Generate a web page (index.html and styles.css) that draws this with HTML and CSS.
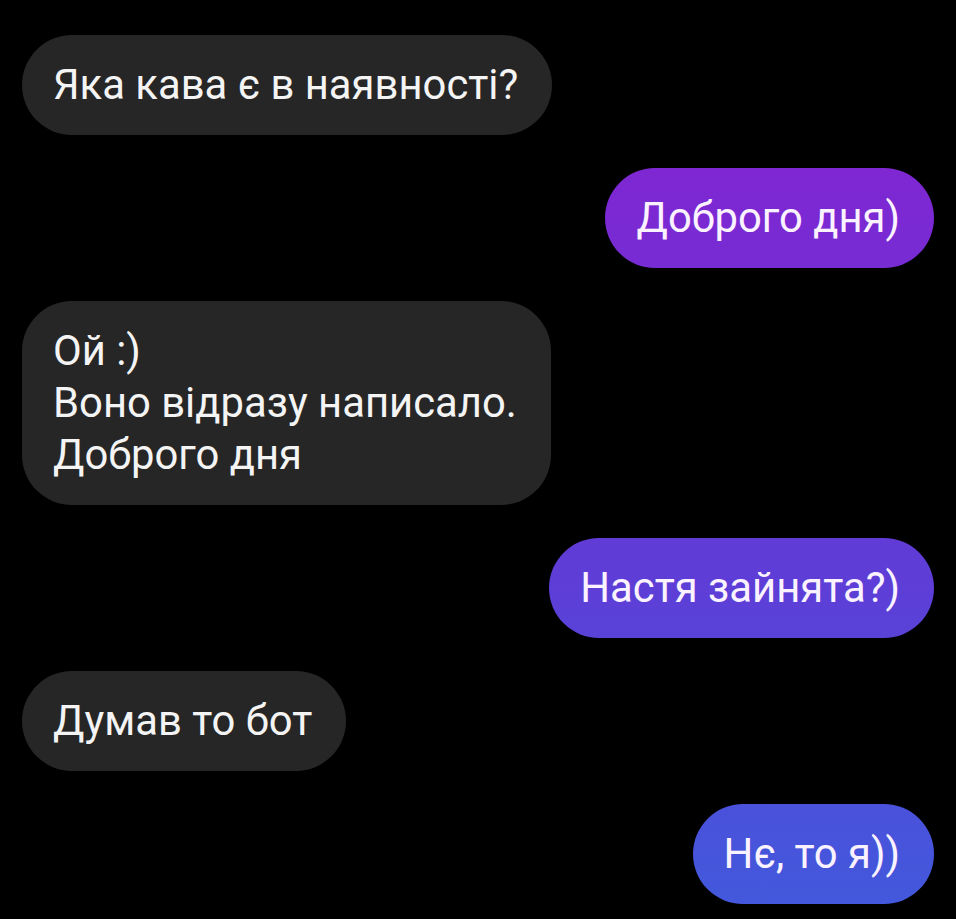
FILE: index.html
```html
<!DOCTYPE html>
<html lang="uk">
<head>
  <meta charset="utf-8">
  <title>Чат</title>
  <meta name="viewport" content="width=device-width, initial-scale=1.0">
  <link rel="stylesheet" href="styles.css">
</head>
<body>

<div id="thread">
  <div class="msg theirs">Яка кава є в наявності?</div>
  <div class="msg mine">Доброго дня)</div>
  <div class="msg theirs">Ой :)<br>Воно відразу написало.<br>Доброго дня</div>
  <div class="msg mine">Настя зайнята?)</div>
  <div class="msg theirs">Думав то бот</div>
  <div class="msg mine">Нє, то я))</div>
</div>

</body>
</html>
```
FILE: styles.css
```css
html, body {
  margin: 0;
  height: 100%;
  background-color: #000000;
  font-family: Roboto, "Noto Sans", sans-serif;
}

#thread {
  display: flex;
  flex-direction: column;
  gap: 33px;
  padding: 35px 22px 0 22px;
}

.msg {
  padding: 24px 34px 24px 31px;
  font-size: 41.8px;
  line-height: 52px;
  border-radius: 50px;
  color: #f4f4f4;
  max-width: 70%;
}

.theirs {
  align-self: flex-start;
  background-color: #262626;
}

/* gradient is pinned to the window so each bubble picks its own shade */
.mine {
  align-self: flex-end;
  color: #fbf2ff;
  background-image: linear-gradient(to bottom, #8a22cf 0px, #7b29d3 218px, #5d3ed7 588px, #4655db 853px, #4259dc 919px);
  background-attachment: fixed;
}
```
